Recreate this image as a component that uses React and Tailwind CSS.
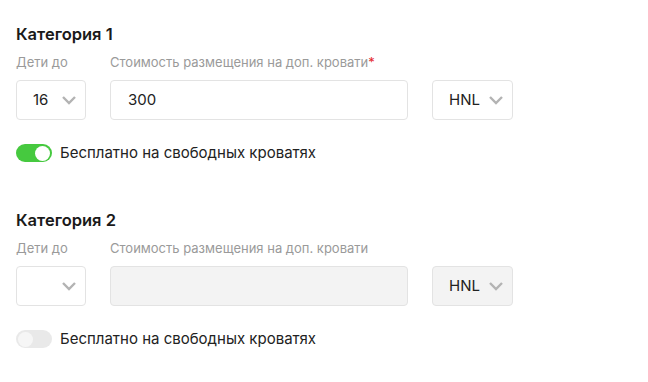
const categories = [
    { title: "Категория 1", age: "16", price: "300", required: true, free: true, disabled: false },
    { title: "Категория 2", age: "", price: "", required: false, free: false, disabled: true },
];

function Chevron() {
    return (
        <svg width="16" height="10" viewBox="0 0 16 10" className="shrink-0">
            <path d="M2 2l6 6 6-6" fill="none" stroke="#b3b3b3" strokeWidth="2.4" />
        </svg>
    );
}

function Toggle({ on }) {
    return (
        <div className={`w-[36px] h-[18px] rounded-full p-[2px] flex items-center ${on ? "bg-[#46c93f] justify-end" : "bg-[#e9e9e9] justify-start"}`}>
            <div className={`w-[15px] h-[15px] rounded-full ${on ? "bg-white" : "bg-[#f6f6f6]"}`} />
        </div>
    );
}

function Category({ item }) {
    return (
        <div className="flex flex-col">
            <h3 className="text-[16.5px] leading-[24px] font-semibold text-[#1a1a1a]">{item.title}</h3>
            <div className="flex gap-[24px] mt-[8px]">
                <div className="flex flex-col w-[70px]">
                    <label className="text-[13px] leading-[16px] text-[#9a9a9a]">Дети до</label>
                    <div className="mt-[10px] h-[40px] border border-[#e3e3e3] rounded-[4px] bg-white flex items-center justify-between pl-[16px] pr-[8px]">
                        <span className="text-[15px] text-[#222]">{item.age}</span>
                        <Chevron />
                    </div>
                </div>
                <div className="flex flex-col w-[298px]">
                    <label className="text-[13px] leading-[16px] text-[#9a9a9a]">
                        Стоимость размещения на доп. кровати
                        {item.required && <span className="text-[#e5262b]">*</span>}
                    </label>
                    <div className={`mt-[10px] h-[40px] border border-[#e3e3e3] rounded-[4px] flex items-center px-[17px] ${item.disabled ? "bg-[#f3f3f3]" : "bg-white"}`}>
                        <span className="text-[15px] text-[#222]">{item.price}</span>
                    </div>
                </div>
                <div className="flex flex-col w-[81px]">
                    <div className="h-[16px]" />
                    <div className={`mt-[10px] h-[40px] border border-[#e3e3e3] rounded-[4px] flex items-center justify-between pl-[16px] pr-[8px] ${item.disabled ? "bg-[#f3f3f3]" : "bg-white"}`}>
                        <span className="text-[15px] text-[#222]">HNL</span>
                        <Chevron />
                    </div>
                </div>
            </div>
            <div className="flex items-center gap-[8px] mt-[23px] h-[20px]">
                <Toggle on={item.free} />
                <span className="text-[15px] leading-[20px] text-[#222]">Бесплатно на свободных кроватях</span>
            </div>
        </div>
    );
}

export default function App() {
    return (
        <div className="w-[648px] h-[382px] bg-white pl-[16px] pt-[22px] flex flex-col gap-[45px] font-['Inter',sans-serif]">
            {categories.map(item => (
                <Category key={item.title} item={item} />
            ))}
        </div>
    );
}
